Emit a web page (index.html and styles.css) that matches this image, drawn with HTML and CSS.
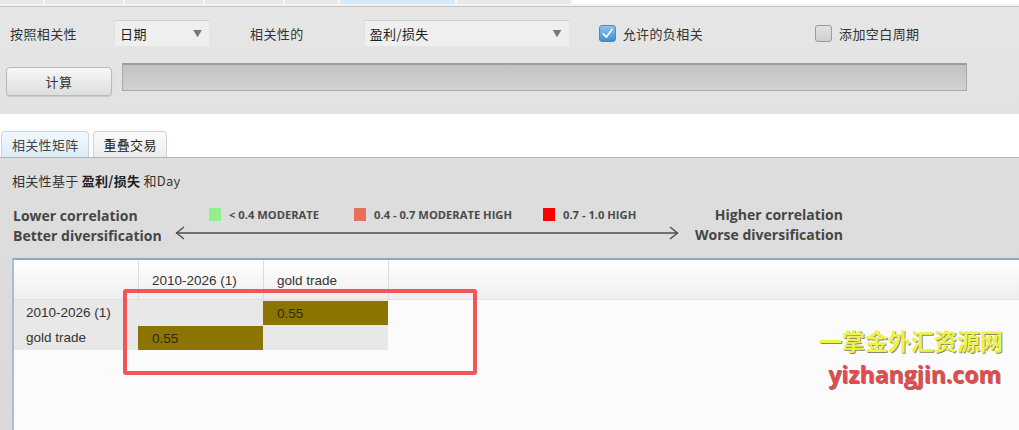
FILE: index.html
```html
<!DOCTYPE html>
<html lang="zh">
<head>
<meta charset="utf-8">
<title>相关性矩阵</title>
<link rel="stylesheet" href="styles.css">
</head>
<body>
<div class="page">
  <div class="topstrip">
    <div class="seg" style="width:45px"></div>
    <div class="seg" style="width:80px"></div>
    <div class="seg" style="width:80px"></div>
    <div class="seg" style="width:80px"></div>
    <div class="seg" style="width:55px"></div>
    <div class="seg seg-active" style="width:117px"></div>
    <div class="seg" style="width:116px"></div>
    <div class="seg seg-blank"></div>
  </div>

  <div class="toolbar">
    <div class="row row-options">
      <span class="lbl lbl-1">按照相关性</span>
      <div class="select select-date"><span>日期</span><span class="caret">▼</span></div>
      <span class="lbl lbl-2">相关性的</span>
      <div class="select select-profit"><span>盈利/损失</span><span class="caret">▼</span></div>
      <label class="check check-1"><span class="box box-on"><svg viewBox="0 0 16 16" width="15" height="15"><path d="M3.5 8.5 L6.8 11.8 L12.8 3.6" fill="none" stroke="#fff" stroke-width="1.8" stroke-linecap="round" stroke-linejoin="round"/></svg></span>允许的负相关</label>
      <label class="check check-2"><span class="box"></span>添加空白周期</label>
    </div>
    <div class="row row-calc">
      <button class="btn">计算</button>
      <div class="progress"></div>
    </div>
  </div>

  <div class="gap"></div>

  <div class="tabs">
    <div class="tab tab-active">相关性矩阵</div>
    <div class="tab">重叠交易</div>
  </div>

  <div class="panel">
    <div class="title">相关性基于 <b>盈利/损失</b> 和Day</div>
    <div class="legend">
      <div class="side side-left">
        <div>Lower correlation</div>
        <div>Better diversification</div>
      </div>
      <div class="middle">
        <div class="items">
          <span class="item item-1"><i class="sw sw-green"></i>&lt; 0.4 MODERATE</span>
          <span class="item item-2"><i class="sw sw-salmon"></i>0.4 - 0.7 MODERATE HIGH</span>
          <span class="item item-3"><i class="sw sw-red"></i>0.7 - 1.0 HIGH</span>
        </div>
        <svg class="arrow" width="504" height="14" viewBox="0 0 504 14">
          <line x1="1" y1="7" x2="503" y2="7" stroke="#4a4a4a" stroke-width="1.3"/>
          <polyline points="9,1 1.5,7 9,13" fill="none" stroke="#4a4a4a" stroke-width="1.3"/>
          <polyline points="495,1 502.5,7 495,13" fill="none" stroke="#4a4a4a" stroke-width="1.3"/>
        </svg>
      </div>
      <div class="side side-right">
        <div>Higher correlation</div>
        <div>Worse diversification</div>
      </div>
    </div>

    <div class="matrix">
      <div class="mrow mhead">
        <div class="cell c0"></div>
        <div class="cell hc">2010-2026 (1)</div>
        <div class="cell hc">gold trade</div>
        <div class="cell hc hc-last"></div>
      </div>
      <div class="mrow mdata">
        <div class="cell c0 rl">2010-2026 (1)</div>
        <div class="cell dc"></div>
        <div class="cell dc hot">0.55</div>
      </div>
      <div class="mrow mdata">
        <div class="cell c0 rl">gold trade</div>
        <div class="cell dc hot">0.55</div>
        <div class="cell dc"></div>
      </div>

      <div class="annot"></div>
      <div class="watermark">
        <div class="wm-cn">一掌金外汇资源网</div>
        <div class="wm-en">yizhangjin.com</div>
      </div>
    </div>
  </div>
</div>
</body>
</html>
```

FILE: styles.css
```css
* { box-sizing: border-box; }
html, body { margin: 0; padding: 0; }
body {
  width: 1019px;
  height: 430px;
  overflow: hidden;
  background: #ffffff;
  font-family: "Noto Sans CJK SC", "Liberation Sans", sans-serif;
  color: #333;
}
.page { width: 1019px; height: 430px; display: flex; flex-direction: column; overflow: hidden; }
.page > * { flex-shrink: 0; }

/* top strip */
.topstrip {
  display: flex;
  height: 7px;
  border-bottom: 1px solid #c4c4c4;
  box-shadow: inset 0 -2px 0 #f2f2f2, inset 0 -3px 0 #bdbdbd;
  background: #e8e8e8;
}
.seg {
  height: 4px;
  background: #e9e9e9;
  border-right: 2px solid #f8f8f8;
}
.seg-active { background: #d6eaf9; }
.seg-blank { flex: 1; background: #fff; border-right: 0; }

/* toolbar */
.toolbar {
  height: 107px;
  background: linear-gradient(#e6e6e6, #e2e2e2);
  padding-top: 13px;
}
.row { display: flex; align-items: center; }
.row-options { height: 26px; font-size: 13px; letter-spacing: 0.4px; }
.lbl { color: #333; }
.lbl-1 { margin-left: 10px; }
.select {
  display: flex;
  align-items: center;
  justify-content: space-between;
  height: 26px;
  background: #efefef;
  border-top: 1px solid #d2d2d2;
  border-left: 1px solid #e2e2e2;
  padding: 0 7px 0 5px;
  color: #222;
}
.select-date { margin-left: 37px; width: 95px; }
.lbl-2 { margin-left: 41px; }
.select-profit { margin-left: 60px; width: 205px; }
.caret { font-size: 9px; color: #777; letter-spacing: 0; }
.check { display: flex; align-items: center; color: #333; }
.check-1 { margin-left: 30px; }
.check-2 { margin-left: 112px; }
.box {
  width: 17px;
  height: 17px;
  border-radius: 3px;
  border: 1px solid #9a9a9a;
  background: linear-gradient(#e2e2e2, #cfcfcf);
  margin-right: 7px;
  display: flex;
  align-items: center;
  justify-content: center;
}
.box-on {
  border-color: #5f86aa;
  background: linear-gradient(#8cc4ee, #3f8ed6);
}

.row-calc { margin-top: 17px; align-items: flex-start; }
.btn {
  margin-left: 6px;
  margin-top: 4px;
  width: 106px;
  height: 29px;
  border: 1px solid #b9b9b9;
  border-radius: 4px;
  background: linear-gradient(#f7f7f7, #dedede);
  box-shadow: 0 1px 1px rgba(0,0,0,0.12);
  font-family: "Noto Sans CJK SC", sans-serif;
  font-size: 13px;
  color: #333;
  letter-spacing: 0.5px;
  padding: 0;
}
.progress {
  margin-left: 10px;
  width: 845px;
  height: 28px;
  border: 1px solid #aaaaaa;
  border-top: 2px solid #9c9c9c;
  background: linear-gradient(#c2c2c2, #d2d2d2);
}

.gap { height: 17px; background: #fff; }

/* tabs */
.tabs { display: flex; height: 26px; padding-left: 1px; align-items: flex-end; }
.tab {
  height: 26px;
  padding: 0 9px 0 10px;
  margin-right: 4px;
  border: 1px solid #cdd3d8;
  border-bottom: 0;
  border-radius: 4px 4px 0 0;
  background: linear-gradient(#fbfbfb, #ececec);
  font-size: 13px;
  line-height: 25px;
  letter-spacing: 0.3px;
  color: #222;
}
.tab-active {
  background: linear-gradient(#f2f9fe, #dcedf9);
  border-color: #c8d6e2;
  color: #444;
}

/* panel */
.panel {
  flex: 1 1 auto;
  min-height: 0;
  overflow: hidden;
  position: relative;
  background: linear-gradient(#dedede, #d9d9d9);
  border-top: 1px solid #b4b4b4;
}
.title {
  padding: 13px 0 0 12px;
  height: 38px;
  font-size: 13px;
  letter-spacing: 0.3px;
  color: #333;
}
.title b { font-weight: 700; color: #222; }

.legend {
  display: flex;
  height: 62px;
  padding-top: 9px;
  font-family: "Open Sans", "Liberation Sans", sans-serif;
  font-weight: 700;
  color: #464646;
}
.side { font-size: 14px; line-height: 20px; }
.side-left { margin-left: 13px; width: 162px; padding-top: 1px; }
.side-right { margin-left: 14px; width: 150px; text-align: right; }
.middle { width: 504px; display: flex; flex-direction: column; }
.items {
  display: flex;
  align-items: center;
  height: 18px;
  font-size: 11.2px;
  color: #4a4a4a;
}
.item { display: flex; align-items: center; }
.item-1 { margin-left: 34px; }
.item-2 { margin-left: 35px; }
.item-3 { margin-left: 31px; }
.sw { display: inline-block; width: 12px; height: 13px; margin-right: 8px; }
.sw-green { background: #93ee8f; }
.sw-salmon { background: #e8705e; }
.sw-red { background: #ff0000; }
.arrow { display: block; margin-top: 3px; }

/* matrix */
.matrix {
  position: relative;
  margin-left: 12px;
  height: 180px;
  background: #fbfbfb;
  border-left: 2px solid #a9bdd2;
  border-top: 2px solid #8fa8c2;
  font-family: "Liberation Sans", Arial, sans-serif;
  font-size: 13.5px;
  color: #333;
}
.mrow { display: flex; }
.mhead {
  height: 40px;
  background: linear-gradient(#ffffff, #eeeeee);
  border-bottom: 1px solid #e0e0e0;
}
.cell { width: 125px; display: flex; align-items: center; }
.c0 { width: 124px; }
.hc {
  border-left: 1px solid #dcdcdc;
  padding-left: 13px;
  padding-top: 2px;
}
.hc-last { width: 1px; }
.mdata { height: 25px; }
.mdata .cell { background: #e8e8e8; }
.rl { padding-left: 12px; }
.dc { padding-left: 14px; }
.mdata .cell.hot { background: #8b7400; color: #2e2a10; border-top: 1px solid #e8e8e8; }

.annot {
  position: absolute;
  left: 109px;
  top: 29px;
  width: 354px;
  height: 86px;
  border: 4px solid #f25656;
  border-radius: 3px;
}
.watermark {
  position: absolute;
  right: 16px;
  top: 65px;
  text-align: right;
  font-weight: 700;
}
.wm-cn {
  font-family: "Noto Sans CJK SC", sans-serif;
  font-size: 23px;
  line-height: 30px;
  color: #eef24a;
  letter-spacing: 0;
  text-shadow: 1px 1px 0 #8a8a6a;
}
.wm-en {
  font-family: "Open Sans", "Liberation Sans", sans-serif;
  font-size: 23px;
  line-height: 30px;
  margin-top: 4px;
  color: #e24b4b;
  margin-right: 2px;
  text-shadow: 1px 1px 0 #9a6a6a;
}
```
